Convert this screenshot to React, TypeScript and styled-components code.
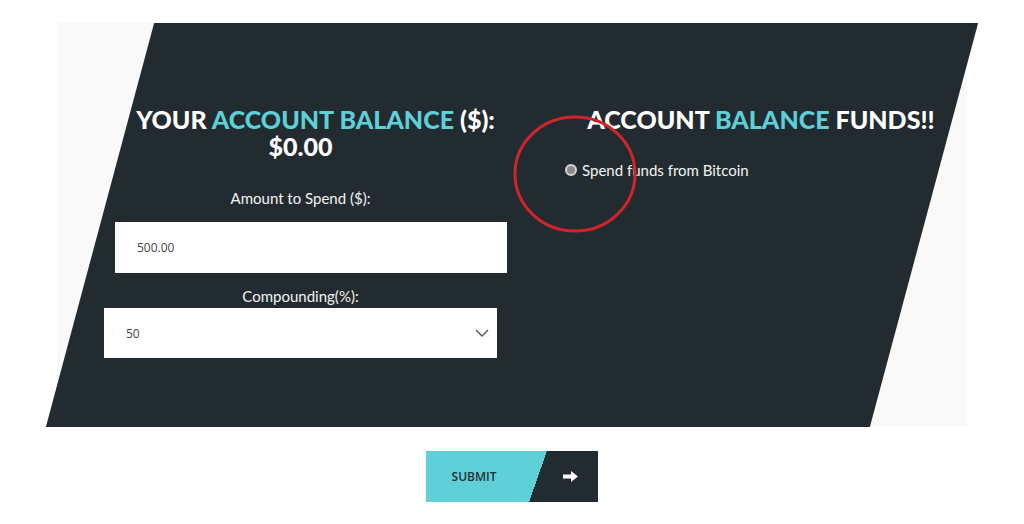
import styled, { createGlobalStyle } from "styled-components";

const GlobalStyle = createGlobalStyle`
  html, body {
    margin: 0;
    padding: 0;
    background: #ffffff;
  }
  body {
    font-family: "Lato", "Open Sans", sans-serif;
  }
`;

const DARK = "#222c30";
const CYAN = "#5fcfd8";

function Chevron() {
  return (
    <svg width="14" height="8" viewBox="0 0 14 8" fill="none">
      <path d="M1 1l6 6 6-6" stroke="#555" strokeWidth="1.4" />
    </svg>
  );
}

function ArrowIcon() {
  return (
    <svg width="15" height="11" viewBox="0 0 15 11">
      <path d="M0 3.5h8V0l7 5.5-7 5.5V7.5H0z" fill="#ffffff" />
    </svg>
  );
}

function App() {
  return (
    <>
      <GlobalStyle />
      <Page>
        <Panel>
          <Columns>
            <LeftCol>
              <Title $shift={30}>
                YOUR <Accent>ACCOUNT BALANCE</Accent> ($):
              </Title>
              <Title $shift={0}>$0.00</Title>

              <Label $top={28}>Amount to Spend ($):</Label>
              <AmountInput defaultValue="500.00" />

              <Label $top={13}>Compounding(%):</Label>
              <SelectBox>
                <span>50</span>
                <Chevron />
              </SelectBox>
            </LeftCol>

            <RightCol>
              <Title $shift={0}>
                ACCOUNT <Accent>BALANCE</Accent> FUNDS!!
              </Title>
              <RadioRow>
                <Radio />
                Spend funds from Bitcoin
              </RadioRow>
              <Marker viewBox="0 0 130 124">
                <ellipse
                  cx="65"
                  cy="62"
                  rx="60"
                  ry="57"
                  fill="none"
                  stroke="#d0242b"
                  strokeWidth="3"
                />
              </Marker>
            </RightCol>
          </Columns>
        </Panel>

        <SubmitButton>
          <SubmitText>SUBMIT</SubmitText>
          <ArrowSlot>
            <ArrowIcon />
          </ArrowSlot>
        </SubmitButton>
      </Page>
    </>
  );
}

const Page = styled.div`
  display: flex;
  flex-direction: column;
  align-items: center;
  padding-top: 23px;
`;

const Panel = styled.div`
  position: relative;
  width: 910px;
  height: 404px;
  background: #f9f9f9;
  box-sizing: border-box;
  padding: 83px 0 0 47px;

  &::before {
    content: "";
    position: absolute;
    top: 0;
    left: 43px;
    width: 824px;
    height: 100%;
    background: ${DARK};
    transform: skewX(-15deg);
  }
`;

const Columns = styled.div`
  position: relative;
  display: flex;
  gap: 68px;
`;

const LeftCol = styled.div`
  width: 393px;
  display: flex;
  flex-direction: column;
`;

const RightCol = styled.div`
  position: relative;
  width: 392px;
  display: flex;
  flex-direction: column;
`;

const Title = styled.h2<{ $shift: number }>`
  margin: 0;
  padding-left: ${(p) => p.$shift}px;
  text-align: center;
  white-space: nowrap;
  font-family: "Lato", sans-serif;
  font-weight: 900;
  font-size: 25px;
  line-height: 27px;
  color: #ffffff;
`;

const Accent = styled.span`
  color: ${CYAN};
`;

const Label = styled.div<{ $top: number }>`
  margin-top: ${(p) => p.$top}px;
  text-align: center;
  font-size: 15px;
  line-height: 20px;
  color: #f2f2f2;
`;

const AmountInput = styled.input`
  margin: 14px 0 0 11px;
  width: 392px;
  height: 51px;
  box-sizing: border-box;
  border: none;
  outline: none;
  padding: 0 22px;
  background: #ffffff;
  font-family: "Open Sans", sans-serif;
  font-size: 12px;
  color: #444;
`;

const SelectBox = styled.div`
  margin-top: 2px;
  height: 50px;
  box-sizing: border-box;
  padding: 0 8px 0 22px;
  background: #ffffff;
  display: flex;
  align-items: center;
  justify-content: space-between;
  font-family: "Open Sans", sans-serif;
  font-size: 12px;
  color: #444;
`;

const RadioRow = styled.label`
  margin-top: 27px;
  display: flex;
  align-items: center;
  gap: 5px;
  font-size: 15px;
  line-height: 20px;
  color: #f4f4f4;
`;

const Radio = styled.span`
  width: 12px;
  height: 12px;
  border-radius: 50%;
  box-sizing: border-box;
  background: #8a8a8a;
  border: 2.5px solid #d6d6d6;
`;

const Marker = styled.svg`
  position: absolute;
  left: -55px;
  top: 6px;
  width: 130px;
  height: 124px;
  pointer-events: none;
`;

const SubmitButton = styled.button`
  margin-top: 24px;
  width: 172px;
  height: 51px;
  border: none;
  padding: 0;
  display: flex;
  align-items: center;
  cursor: pointer;
  background: linear-gradient(109.4deg, ${CYAN} 63.7%, ${DARK} 63.7%);
`;

const SubmitText = styled.span`
  width: 112px;
  padding-right: 16px;
  box-sizing: border-box;
  text-align: center;
  font-family: "Open Sans", sans-serif;
  font-weight: 600;
  font-size: 12px;
  color: #1f3036;
`;

const ArrowSlot = styled.span`
  flex: 1;
  display: flex;
  justify-content: center;
  padding-left: 4px;
`;

export default App;
